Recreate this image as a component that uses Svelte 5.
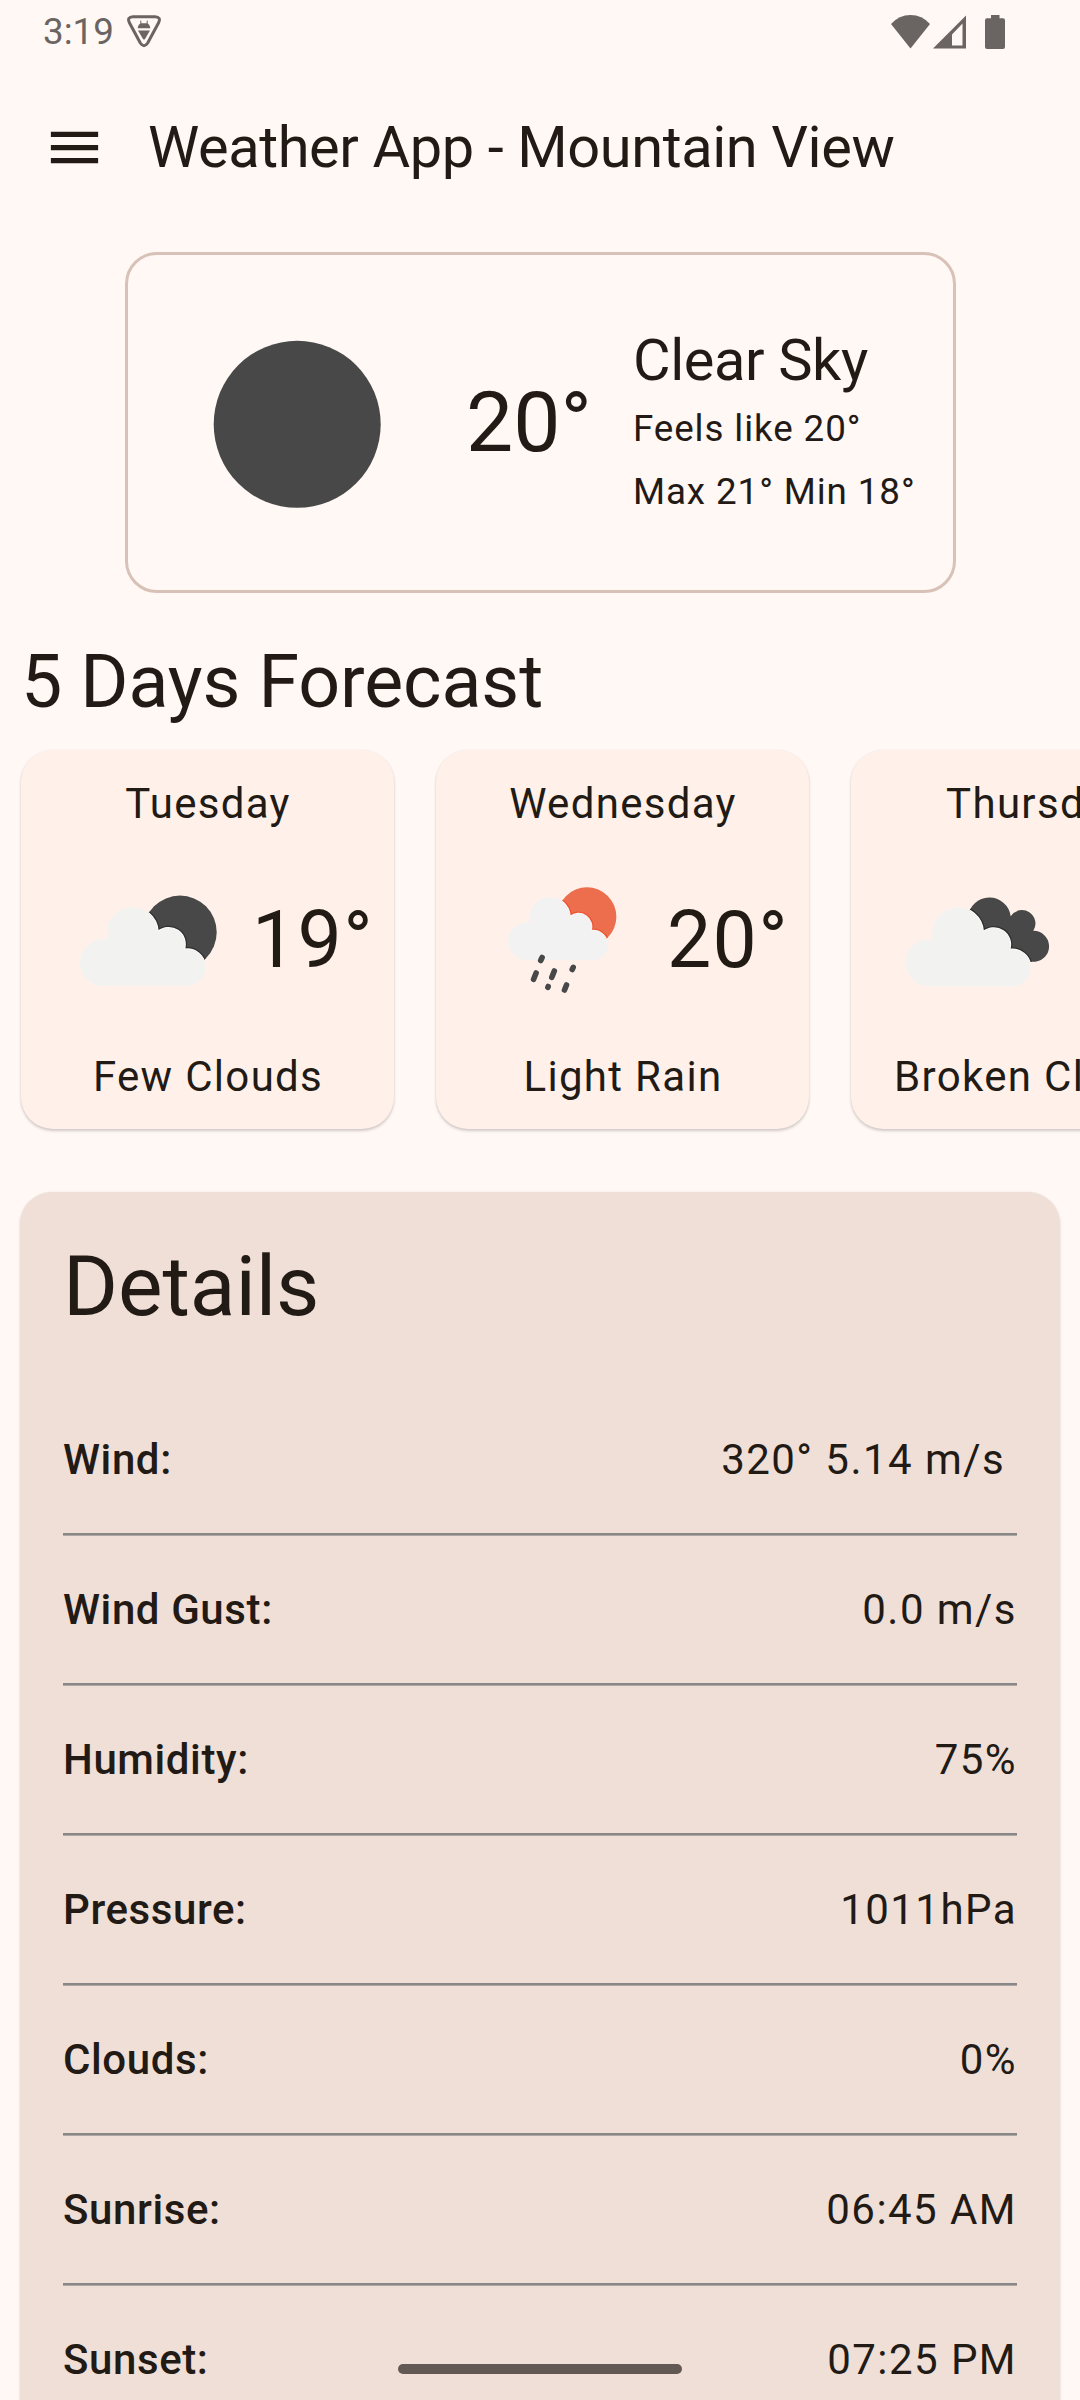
<script>
  const forecast = [
    { day: 'Tuesday', temp: '19°', label: 'Few Clouds', icon: 'few' },
    { day: 'Wednesday', temp: '20°', label: 'Light Rain', icon: 'rain' },
    { day: 'Thursday', temp: '20°', label: 'Broken Clouds', icon: 'broken' }
  ];
  const details = [
    ['Wind:', '320° 5.14 m/s '],
    ['Wind Gust:', '0.0 m/s'],
    ['Humidity:', '75%'],
    ['Pressure:', '1011hPa'],
    ['Clouds:', '0%'],
    ['Sunrise:', '06:45 AM'],
    ['Sunset:', '07:25 PM']
  ];
</script>

{#snippet cloudShape()}
  <path d="M32.5 121A23.5 23.5 0 0 1 32.5 74H36.6A25.6 25.6 0 1 1 87 66.5A16.500 16.500 0 0 1 113.300 84.200A18.500 18.500 0 1 1 116.500 121Z" />
{/snippet}

<div class="screen">
  <div class="status">
    <span class="time">3:19</span>
    <svg class="shield" width="34" height="33" viewBox="0 0 34 33">
      <path d="M6 1.700H28Q34.200 2 31.700 7.500L20.700 28Q17 33.500 13.300 28L2.300 7.500Q-.2 2 6 1.700Z" fill="none" stroke="#6a6462" stroke-width="3" />
      <path d="M10.700 13.200q.5-4.500 3.800-5h5q3.300.5 3.800 5zM11 15.500h12L18 24q-1 1.200-2 0z" fill="#6a6462" />
      <path d="M13.800 9V5.600M20.200 9V5.600" stroke="#6a6462" stroke-width="1" />
    </svg>
    <div class="system">
      <svg width="39" height="34" viewBox="0 0 39 34"><path d="M0 9Q8 0 19.500 0T39 9L19.500 33.500Z" fill="#6a6462" /></svg>
      <svg width="33" height="34" viewBox="0 0 33 34"><path fill-rule="evenodd" d="M0 33.500L33 .5V33.500ZM19 19.500V30.500H29.500V8.500Z" fill="#6a6462" /></svg>
      <svg class="battery" width="20" height="34" viewBox="0 0 20 34"><path d="M6 0h8.500v3.300H18q2 0 2 2V32q0 2-2 2H2q-2 0-2-2V5.300q0-2 2-2h4z" fill="#6a6462" /></svg>
    </div>
  </div>

  <header>
    <svg width="63" height="63" viewBox="0 0 24 24"><path d="M3 18h18v-2H3v2zm0-5h18v-2H3v2zm0-7v2h18V6H3z" fill="#231a16" /></svg>
    <h1>Weather App - Mountain View</h1>
  </header>

  <section class="current">
    <svg width="168" height="170" viewBox="0 0 168 170"><circle cx="84.200" cy="86.300" r="83.500" fill="#484849" /></svg>
    <div class="now">20°</div>
    <div class="summary">
      <div class="sky">Clear Sky</div>
      <div class="line">Feels like 20°</div>
      <div class="line">Max 21° Min 18°</div>
    </div>
  </section>

  <h2>5 Days Forecast</h2>
  <div class="cards">
    {#each forecast as f}
      <article>
        <div class="label">{f.day}</div>
        <div class="mid">
          <svg width="152" height="150" viewBox="0 0 152 150">
            {#if f.icon === 'few'}
              <clipPath id="moon"><circle cx="109" cy="67.300" r="36.700" /></clipPath>
              <circle cx="109" cy="67.300" r="36.700" fill="#484849" />
              <g clip-path="url(#moon)" fill="none" stroke="#2f2f30" stroke-width="4">{@render cloudShape()}</g>
              <g clip-path="url(#moon)" fill="#fff" stroke="#fff" stroke-width="1.500">{@render cloudShape()}</g>
              <g fill="#f2f2f0">{@render cloudShape()}</g>
            {:else if f.icon === 'rain'}
              <g transform="translate(14.800 -1.300) scale(.796)">
                <clipPath id="sun"><circle cx="108.200" cy="66.700" r="37" /></clipPath>
                <circle cx="108.200" cy="66.700" r="37" fill="#ec6e4c" />
                <g clip-path="url(#sun)" fill="none" stroke="#ee5432" stroke-width="5">{@render cloudShape()}</g>
                <g clip-path="url(#sun)" fill="#fff" stroke="#f6f8fb" stroke-width="1.800">{@render cloudShape()}</g>
                <g fill="#f2f2f2">{@render cloudShape()}</g>
              </g>
              <path d="M56.100 92.500L54.700 95.500M50.100 108L47.600 114.300M68.300 106L65.800 112.300M87.200 102.300L86.200 104.500M62.200 121.500L61.900 122.300M80.500 120L78.500 125" fill="none" stroke="#484849" stroke-width="5.600" stroke-linecap="round" />
            {:else}
              <clipPath id="back"><path d="M67 52A21.500 21.500 0 0 1 109.700 51.200A12.800 12.800 0 0 1 132.300 65.800A15.500 15.500 0 0 1 134.300 96.700H67Z" /></clipPath>
              <path d="M67 52A21.500 21.500 0 0 1 109.700 51.200A12.800 12.800 0 0 1 132.300 65.800A15.500 15.500 0 0 1 134.300 96.700H67Z" fill="#484849" />
              <g clip-path="url(#back)">
                <g transform="translate(-4.700 .3)" fill="none" stroke="#2f2f30" stroke-width="4">{@render cloudShape()}</g>
                <g transform="translate(-4.700 .3)" fill="#fff" stroke="#fff" stroke-width="1.500">{@render cloudShape()}</g>
              </g>
              <g transform="translate(-4.700 .3)" fill="#f2f2f0">{@render cloudShape()}</g>
            {/if}
          </svg>
          <div class="temp">{f.temp}</div>
        </div>
        <div class="label">{f.label}</div>
      </article>
    {/each}
  </div>

  <section class="details">
    <h3>Details</h3>
    {#each details as [name, value]}
      <div class="row"><span class="name">{name}</span><span class="value">{value}</span></div>
      <div class="rule"></div>
    {/each}
  </section>

  <div class="pill"></div>
</div>

<style>
  :global(body) { margin: 0; background: #fff8f5; }
  .screen {
    position: relative;
    width: 1080px;
    height: 2400px;
    overflow: hidden;
    background: #fff8f5;
    color: #231a16;
    font-family: Roboto, sans-serif;
    font-weight: 400;
  }
  svg { display: block; flex: none; }
  h1, h2, h3 { margin: 0; font-weight: 400; }
  .status {
    display: flex;
    height: 63px;
    box-sizing: border-box;
    padding: 0 75px 0 43px;
    align-items: center;
  }
  .time { font-size: 36.75px; line-height: 63px; color: #6a6462; }
  .shield { margin-left: 13px; }
  .system { display: flex; margin-left: auto; gap: 3px; }
  .battery { margin-left: 16px; }
  header {
    display: flex;
    align-items: center;
    height: 168px;
    padding-left: 43px;
    gap: 42px;
  }
  h1 { font-size: 57.75px; line-height: 73px; letter-spacing: -.4px; white-space: nowrap; }
  .current {
    display: flex;
    align-items: center;
    box-sizing: border-box;
    width: 831px;
    height: 341px;
    margin: 21px 0 0 125px;
    padding-left: 85px;
    border: 3px solid #d8c2b8;
    border-radius: 32px;
    white-space: nowrap;
  }
  .now { width: 167px; margin-left: 85px; font-size: 84px; line-height: 105px; }
  .sky { font-size: 57.75px; line-height: 74px; letter-spacing: -.4px; }
  .line { font-size: 36.75px; line-height: 63px; letter-spacing: .9px; }
  h2 { margin: 42px 0 0 21px; font-size: 73.5px; line-height: 94px; letter-spacing: -.1px; }
  .cards { display: flex; gap: 42px; margin: 21px 0 0 21px; }
  article {
    display: flex;
    flex: none;
    flex-direction: column;
    justify-content: space-between;
    box-sizing: border-box;
    width: 373px;
    height: 379px;
    padding: 22px 0 21px;
    border-radius: 32px;
    background: #fff1e9;
    color: #221a14;
    box-shadow: 0 2px 3px rgba(0, 0, 0, .18), 0 0 2px rgba(0, 0, 0, .06);
  }
  .label {
    padding-left: 1px;
    font-size: 42px;
    line-height: 63px;
    letter-spacing: 1.3125px;
    text-align: center;
    white-space: nowrap;
  }
  .mid { display: flex; align-items: center; padding-left: 50px; }
  .temp { margin-left: 29px; font-size: 78.75px; line-height: 105px; letter-spacing: 1.3125px; }
  .details {
    margin: 63px 20px 0;
    padding: 42px 43px 0;
    border-radius: 32px 32px 0 0;
    background: #f0dfd7;
    color: #221a14;
    box-shadow: 0 1px 3px rgba(0, 0, 0, .14);
  }
  h3 { font-size: 84px; line-height: 105px; letter-spacing: -.1px; margin-bottom: 47px; }
  .row {
    display: flex;
    justify-content: space-between;
    align-items: center;
    height: 147px;
    font-size: 42px;
    white-space: pre;
  }
  .name { font-weight: 500; letter-spacing: .6px; }
  .value { letter-spacing: 1.45px; }
  .rule { height: 3px; background: linear-gradient(#888 0 2px, #ada6a3 2px); }
  .pill {
    position: absolute;
    left: 398px;
    top: 2364px;
    width: 284px;
    height: 10px;
    border-radius: 5px;
    background: #625955;
  }
</style>
